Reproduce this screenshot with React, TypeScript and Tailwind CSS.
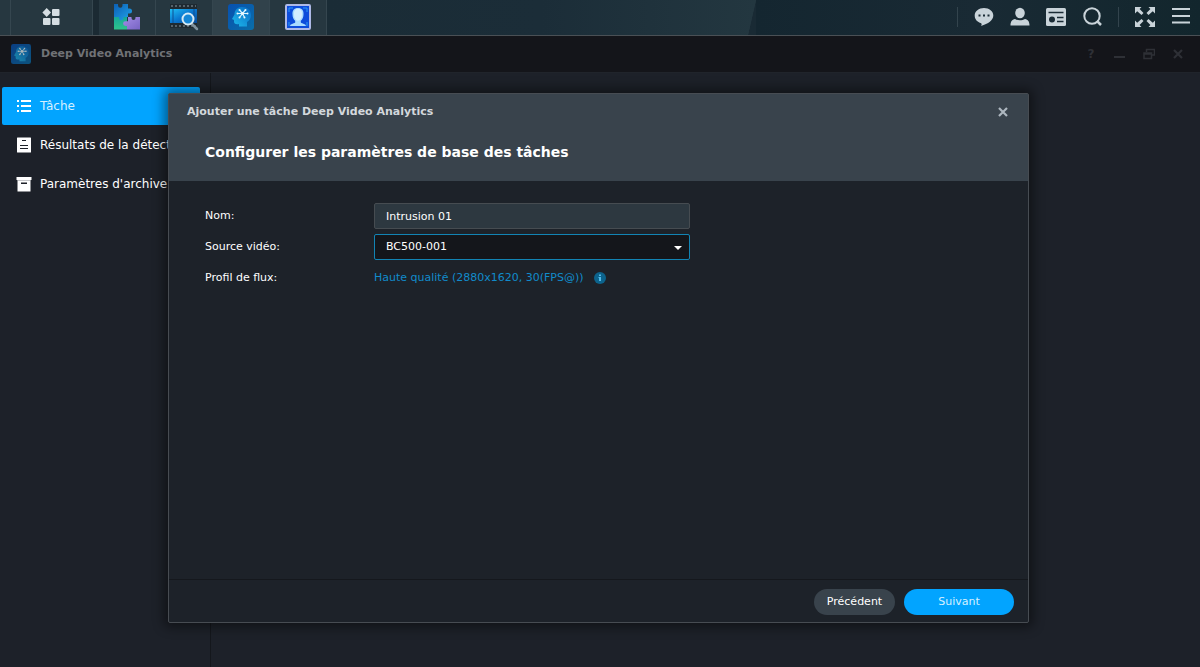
import React from "react";

type IconProps = {
  className?: string
}

type NavItemProps = {
  label: string,
  active?: boolean,
  children: React.ReactNode
}

type TaskTabProps = {
  label: string,
  active?: boolean,
  children: React.ReactNode
}

const AppsIcon: React.FC = () => (
  <svg width="18" height="18" viewBox="0 0 18 18" fill="#d5dde2" aria-hidden="true">
    <path d="M4.700 0 9 4.500 4.700 9 .4 4.500z" />
    <rect x="10" y="1" width="7.500" height="7" rx="1" />
    <rect x="1" y="10" width="7.500" height="7" rx="1" />
    <rect x="10" y="10" width="7.500" height="7" rx="1" />
  </svg>
);

const PuzzleIcon: React.FC = () => (
  <svg width="28" height="28" viewBox="0 0 28 28" aria-hidden="true">
    <defs>
      <linearGradient id="puzzleBlue" x1="0" y1="0" x2="1" y2="1">
        <stop offset="0" stopColor="#0b5fb5" />
        <stop offset="1" stopColor="#22a4ea" />
      </linearGradient>
      <linearGradient id="puzzleGreen" x1="0" y1="0" x2="0" y2="1">
        <stop offset="0" stopColor="#14a59a" />
        <stop offset="1" stopColor="#2fc48a" />
      </linearGradient>
      <linearGradient id="puzzlePurple" x1="0" y1="0" x2="1" y2="1">
        <stop offset="0" stopColor="#a48de6" />
        <stop offset="1" stopColor="#7764c4" />
      </linearGradient>
    </defs>
    <path d="M1 13h13v13.500H1z" fill="url(#puzzleGreen)" />
    <path d="M1 1h4v1.500a2 2 0 0 0 4.500 0V1H15v4.500h1.500a2.400 2.400 0 1 1 0 5H15V14h-4.500v1.500a2.300 2.300 0 0 1-4.500 0V14H1z" fill="url(#puzzleBlue)" />
    <path d="M15 14h3.500v1a2 2 0 0 0 4 0v-1H27v12.500H14V23h-1.500a2.400 2.400 0 1 1 0-4.800H15z" fill="url(#puzzlePurple)" />
  </svg>
);

const FilmSearchIcon: React.FC = () => (
  <svg width="30" height="28" viewBox="0 0 30 28" aria-hidden="true">
    <defs>
      <linearGradient id="film" x1="0" y1="0" x2="1" y2="1">
        <stop offset="0" stopColor="#21c0f5" />
        <stop offset="0.500" stopColor="#0a78d0" />
        <stop offset="1" stopColor="#064a9a" />
      </linearGradient>
    </defs>
    <rect x="1" y="1" width="27" height="24" fill="#1f2a31" />
    <path d="M2 3h25M2 23h25" stroke="#55626a" strokeWidth="2" strokeDasharray="2 2" />
    <rect x="1" y="6" width="27" height="14" fill="url(#film)" />
    <path d="M4 6v14M25 6v14" stroke="#0e4f92" />
    <path d="m23 21 5 5" stroke="#7f929d" strokeWidth="2.500" strokeLinecap="round" />
    <circle cx="19" cy="16" r="5.500" fill="#1687d6" stroke="#d6eaf5" strokeWidth="2" />
  </svg>
);

const BrainIcon: React.FC<IconProps> = ({className}) => (
  <svg viewBox="0 0 26 26" className={className} aria-hidden="true">
    <defs>
      <linearGradient id="brainBg" x1="0" y1="0" x2="1" y2="1">
        <stop offset="0" stopColor="#0750b0" />
        <stop offset="1" stopColor="#0a6ea8" />
      </linearGradient>
      <linearGradient id="brainHead" x1="1" y1="0" x2="0" y2="1">
        <stop offset="0" stopColor="#0668c4" />
        <stop offset="1" stopColor="#1fbcec" />
      </linearGradient>
    </defs>
    <rect width="26" height="26" rx="3" fill="url(#brainBg)" />
    <path d="M14 3c5.500 0 9 3 9 8 0 3.500-1.500 5.500-4 7v4.500h-8V20c-3 .5-5 0-5-2.500V16l-2-1 2.500-4.500C6.500 6 9.500 3 14 3z" fill="url(#brainHead)" />
    <path d="m14.500 9.500-3-3.500m3 3.500 3-3.500m-3 3.500h5m-5 0 2 4m-2-4-3 4m3-4h-5" stroke="#d9f4ff" strokeWidth="1.200" />
    <g fill="#e8f8ff">
      <circle cx="14.500" cy="9.500" r="1.500" />
      <circle cx="11.500" cy="6" r="1" />
      <circle cx="17.500" cy="6" r="1" />
      <circle cx="19.500" cy="9.500" r="1" />
      <circle cx="16.500" cy="13.500" r="1" />
      <circle cx="11.500" cy="13.500" r="1" />
      <circle cx="9.500" cy="9.500" r="1" />
    </g>
  </svg>
);

const FaceIcon: React.FC = () => (
  <svg width="26" height="26" viewBox="0 0 26 26" aria-hidden="true">
    <rect x="1" y="1" width="24" height="24" rx="1" fill="#0d4cdb" stroke="#aeb9e6" strokeWidth="2" />
    <path d="M4 8V4h4m10 0h4v4M4 18v4m18-4v4" stroke="#2c9bf5" fill="none" />
    <path d="M13 4c4 0 5.800 2.500 5.500 6.500 0 3-1.200 5-2.700 6.300v1.700c1.500 1.500 4.700 1 5.200 3.500H5c.5-2.500 3.700-2 5.200-3.500v-1.700c-1.500-1.300-2.700-3.300-2.700-6.300C7.200 6.500 9 4 13 4z" fill="#a9dbff" />
    <path d="M13 5c3.200 0 4.200 2 4 5.500 0 4-2 6-4 6s-4-2-4-6C8.800 7 9.800 5 13 5z" fill="#d4edff" />
  </svg>
);

const ChatIcon: React.FC = () => (
  <svg width="20" height="20" viewBox="0 0 20 20" aria-hidden="true">
    <path d="M10 1c5.200 0 9.300 3.200 9.300 7.600 0 4.800-5 8.200-12.300 10.400.8-1 .8-1.800.2-2.800C3.300 15.200.7 12.500.7 8.600.7 4.200 4.800 1 10 1z" fill="#c9d3d9" />
    <g fill="#1b2b35">
      <rect x="4.500" y="7.500" width="2" height="2" />
      <rect x="9" y="7.500" width="2" height="2" />
      <rect x="13.500" y="7.500" width="2" height="2" />
    </g>
  </svg>
);

const UserIcon: React.FC = () => (
  <svg width="20" height="20" viewBox="0 0 20 20" fill="#c9d3d9" aria-hidden="true">
    <ellipse cx="10" cy="6" rx="4.800" ry="5.300" />
    <path d="M5 12c3 1.800 7 1.800 10 0 3 .7 4.500 2.500 4.500 6.500H.5C.5 14.500 2 12.700 5 12z" />
  </svg>
);

const WidgetIcon: React.FC = () => (
  <svg width="20" height="20" viewBox="0 0 20 20" aria-hidden="true">
    <rect y="1" width="20" height="18" rx="1.500" fill="#c9d3d9" />
    <path d="M2.500 5.500h15" stroke="#1b2b35" strokeWidth="1.500" />
    <circle cx="6" cy="12.500" r="3" fill="#1b2b35" />
    <path d="M11 10.500h6.500M11 14.500h6.500" stroke="#1b2b35" strokeWidth="1.500" />
  </svg>
);

const SearchIcon: React.FC = () => (
  <svg width="20" height="20" viewBox="0 0 20 20" fill="none" stroke="#c9d3d9" strokeWidth="2" aria-hidden="true">
    <circle cx="10" cy="9" r="7.700" />
    <path d="m15 14 4 4" strokeWidth="2.500" />
  </svg>
);

const ExpandIcon: React.FC = () => (
  <svg width="20" height="20" viewBox="0 0 20 20" fill="#c9d3d9" aria-hidden="true">
    <path d="M0 0h6.500L4.600 1.900 8.500 6 6.500 8 2.200 4.300 0 6.500z" />
    <path d="M20 0v6.500l-2.200-2.200L13.500 8l-2-2 3.900-4.100L13.500 0z" />
    <path d="M0 20v-6.500l2.200 2.200L6.500 12l2 2-3.900 4.100L6.500 20z" />
    <path d="M20 20h-6.500l1.900-1.900-3.900-4.100 2-2 4.300 3.700 2.200-2.200z" />
  </svg>
);

const MenuIcon: React.FC = () => (
  <svg width="20" height="20" viewBox="0 0 20 20" stroke="#c9d3d9" strokeWidth="2" aria-hidden="true">
    <path d="M1 2h18M1 9h18M1 15.500h18" />
  </svg>
);

const ListIcon: React.FC = () => (
  <svg width="16" height="14" viewBox="0 0 16 14" fill="#fff" className="shrink-0" aria-hidden="true">
    <path d="M1 1h2v2H1zM1 6h2v2H1zM1 11h2v2H1zM5 1h10v2H5zM5 6h10v2H5zM5 11h10v2H5z" />
  </svg>
);

const ResultIcon: React.FC = () => (
  <svg width="16" height="16" viewBox="0 0 16 16" className="shrink-0" aria-hidden="true">
    <rect x="1" y="0.500" width="14" height="15" rx="0.500" fill="#fff" />
    <path d="M6 3.500h4M4 8.500h8M4 11.500h8" stroke="#1d2129" strokeWidth="1.200" />
  </svg>
);

const ArchiveIcon: React.FC = () => (
  <svg width="16" height="16" viewBox="0 0 16 16" className="shrink-0" aria-hidden="true">
    <path d="M.5 1h15v3H.5zM1.500 4h13v11.500h-13z" fill="#fff" />
    <path d="M1.500 4.500h13" stroke="#8a8d92" strokeWidth="0.500" />
    <rect x="5" y="6.500" width="6" height="1.500" fill="#1d2129" />
  </svg>
);

const CloseIcon: React.FC<IconProps> = ({className}) => (
  <svg width="10" height="10" viewBox="0 0 10 10" stroke="currentColor" strokeWidth="2.200" className={className} aria-hidden="true">
    <path d="m1 1 8 8M9 1 1 9" />
  </svg>
);

const TaskTab: React.FC<TaskTabProps> = ({label, active, children}) => {
  return (
    <button
      type="button"
      aria-label={label}
      className={`flex h-full w-[57px] items-center justify-center border-r border-[#35464f] pb-0.5 ${active ? "bg-[#31424b]" : "bg-[#263740]"}`}
    >
      {children}
    </button>
  );
};

const NavItem: React.FC<NavItemProps> = ({label, active, children}) => {
  return (
    <a
      href="#"
      className={`flex h-[38px] items-center gap-2 rounded-xs pl-3.5 text-xs whitespace-nowrap ${active ? "bg-[#02a4ff] text-[#d5f0ff]" : "text-white"}`}
    >
      {children}
      <span>{label}</span>
    </a>
  );
};

const TopBar: React.FC = () => {
  return (
    <header className="flex h-9 justify-between border-b border-[#4a5055] bg-[#192a34]">
      <div className="flex w-[63%] bg-[#263740] pl-2.5 [clip-path:polygon(0_0,100%_0,calc(100%_-_8px)_100%,0_100%)]">
        <button type="button" aria-label="Menu principal" className="flex w-[83px] items-center justify-center border-x border-[#35464f] pr-0.5 pb-0.5">
          <AppsIcon />
        </button>
        <div className="w-1.5 bg-[#1b2a33]" />
        <TaskTab label="Centre de paquets"><PuzzleIcon /></TaskTab>
        <TaskTab label="Recherche vidéo"><FilmSearchIcon /></TaskTab>
        <TaskTab label="Deep Video Analytics" active><BrainIcon className="size-[26px]" /></TaskTab>
        <TaskTab label="Reconnaissance faciale"><FaceIcon /></TaskTab>
        <div className="flex-1 bg-linear-to-r from-[#1a2c36] via-[#1b2d38] to-[#233740]" />
      </div>
      <div className="flex flex-1 items-center justify-end gap-4 bg-linear-to-r from-[#142630] via-[#192a34] to-[#12262d] pr-[9px] pb-0.5">
        <div className="h-5 w-px bg-[#33444d]" />
        <button type="button" aria-label="Notifications"><ChatIcon /></button>
        <button type="button" aria-label="Utilisateur"><UserIcon /></button>
        <button type="button" aria-label="Widgets"><WidgetIcon /></button>
        <button type="button" aria-label="Rechercher"><SearchIcon /></button>
        <div className="h-5 w-px bg-[#33444d]" />
        <button type="button" aria-label="Plein écran"><ExpandIcon /></button>
        <button type="button" aria-label="Menu"><MenuIcon /></button>
      </div>
    </header>
  );
};

const TitleBar: React.FC = () => {
  return (
    <div className="flex h-9 items-center justify-between bg-[#14151a] pr-4 pl-[11px] text-[#2e3036]">
      <div className="flex items-center gap-2.5">
        <BrainIcon className="size-5 opacity-70" />
        <h1 className="text-[11px] font-bold text-[#707276]">Deep Video Analytics</h1>
      </div>
      <div className="flex items-center gap-[17px]">
        <button type="button" aria-label="Aide" className="w-3 text-xs font-bold">?</button>
        <button type="button" aria-label="Réduire" className="w-3">
          <svg width="12" height="12" viewBox="0 0 12 12" stroke="currentColor" strokeWidth="2"><path d="M0 9h11" /></svg>
        </button>
        <button type="button" aria-label="Restaurer" className="w-3">
          <svg width="12" height="12" viewBox="0 0 12 12" fill="none" stroke="currentColor" strokeWidth="1.500"><path d="M3.500 4V1.500h8V7H9M1 5h7.500v5.500H1zM1 6h7" /></svg>
        </button>
        <button type="button" aria-label="Fermer" className="flex w-3 justify-center"><CloseIcon /></button>
      </div>
    </div>
  );
};

const TaskDialog: React.FC = () => {
  return (
    <section
      role="dialog"
      aria-labelledby="dialog-title"
      className="flex w-[861px] max-w-full flex-col rounded-xs border border-[#474c52] bg-[#1d2229] shadow-[0_0_12px_4px_rgba(0,0,0,0.45)]"
    >
      <div className="h-[87px] bg-[#39434c] pr-5">
        <div className="flex h-9 items-center justify-between pl-[18px]">
          <h2 id="dialog-title" className="text-[11px] font-bold text-[#d3d8dc]">Ajouter une tâche Deep Video Analytics</h2>
          <button type="button" aria-label="Fermer la fenêtre" className="text-[#adb7bf]"><CloseIcon /></button>
        </div>
        <h3 className="pt-2.5 pl-9 text-sm leading-6 font-bold text-white">Configurer les paramètres de base des tâches</h3>
      </div>
      <form className="grid flex-1 grid-cols-[169px_316px] content-start items-center gap-y-[5px] px-9 pt-[22px] text-[11px] text-white">
        <label htmlFor="name">Nom:</label>
        <input
          id="name"
          type="text"
          defaultValue="Intrusion 01"
          className="h-[26px] rounded-xs border border-[#464c51] bg-[#2d3840] px-[11px] outline-none"
        />
        <label htmlFor="source">Source vidéo:</label>
        <div className="relative">
          <select id="source" className="block h-[26px] w-full appearance-none rounded-xs border border-[#1284b4] bg-[#14161b] px-[11px] outline-none">
            <option>BC500-001</option>
          </select>
          <svg width="8" height="4" viewBox="0 0 8 4" fill="#fff" className="pointer-events-none absolute top-3 right-2" aria-hidden="true">
            <path d="M0 0h8L4 4z" />
          </svg>
        </div>
        <span>Profil de flux:</span>
        <div className="flex h-[26px] items-center gap-2.5 text-[#118bcb]">
          <span>Haute qualité (2880x1620, 30(FPS@))</span>
          <svg width="12" height="12" viewBox="0 0 12 12" aria-hidden="true">
            <circle cx="6" cy="6" r="6" fill="#0c638c" />
            <path d="M5 2.500h2V4H5zM4.500 5H7v4H5V6h-.5z" fill="#52b9e8" />
          </svg>
        </div>
      </form>
      <div className="flex h-[43px] items-center justify-end gap-[9px] border-t border-[#15181d] pt-0.5 pr-3.5 text-[11px]">
        <button type="button" className="h-[26px] w-[81px] rounded-full bg-[#39434c] text-white">Précédent</button>
        <button type="button" className="h-[26px] w-[110px] rounded-full bg-[#02a4ff] text-[#d5f0ff]">Suivant</button>
      </div>
    </section>
  );
};

const App: React.FC = () => {
  return (
    <div className="relative flex min-h-screen flex-col overflow-hidden bg-[#1d2129] font-['Verdana','DejaVu_Sans',sans-serif]">
      <TopBar />
      <TitleBar />
      <div className="flex flex-1 border-t border-[#20242b]">
        <nav className="flex w-[211px] flex-col gap-px border-r border-[#14171c] pt-3.5 pr-2.5 pl-0.5">
          <NavItem label="Tâche" active><ListIcon /></NavItem>
          <NavItem label="Résultats de la détection"><ResultIcon /></NavItem>
          <NavItem label="Paramètres d'archive"><ArchiveIcon /></NavItem>
        </nav>
        <main className="flex-1" />
      </div>
      <div className="absolute inset-x-0 top-[93px] bottom-11 flex justify-center pr-[3px]">
        <TaskDialog />
      </div>
    </div>
  );
};

export default App;
